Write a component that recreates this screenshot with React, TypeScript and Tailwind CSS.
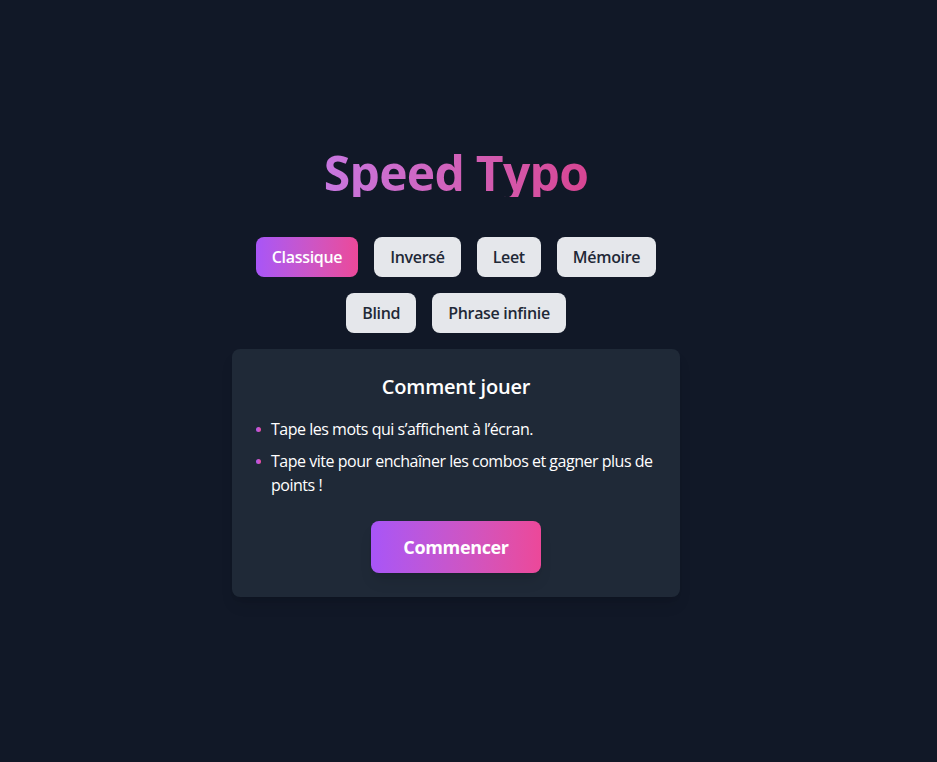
export default function App() {
  const modes = ["Classique", "Inversé", "Leet", "Mémoire", "Blind", "Phrase infinie"];
  const active = "Classique";

  return (
    <main
      className="min-h-screen bg-[#111827] flex flex-col items-center pt-[149px] pr-[25px] text-white"
      style={{ fontFamily: '"Open Sans", "Noto Sans", sans-serif' }}
    >
      <div className="w-full max-w-md flex flex-col items-center">
        <h1 className="w-full text-center text-5xl font-bold tracking-[-0.015em] bg-gradient-to-r from-[#c084fc] to-[#db2777] bg-clip-text text-transparent mb-10">
          Speed Typo
        </h1>

        <div className="flex flex-wrap justify-center gap-4 mb-4 tracking-[-0.02em]">
          {modes.map((m) =>
            m === active ? (
              <button
                key={m}
                className="rounded-lg px-4 py-2 font-semibold text-white bg-gradient-to-r from-[#a855f7] to-[#ec4899]"
              >
                {m}
              </button>
            ) : (
              <button
                key={m}
                className="rounded-lg px-4 py-2 font-semibold text-[#1f2937] bg-[#e5e7eb]"
              >
                {m}
              </button>
            )
          )}
        </div>

        <div className="w-full rounded-lg bg-[#1f2937] p-6 shadow-lg">
          <h2 className="text-xl font-semibold text-center mb-4 tracking-[-0.01em]">Comment jouer</h2>
          <ul className="space-y-2 text-left tracking-[-0.03em]">
            <li className="flex gap-2.5">
              <span className="mt-[10px] h-[5px] w-[5px] shrink-0 rounded-full bg-gradient-to-r from-[#a855f7] to-[#ec4899]" />
              <span>Tape les mots qui s’affichent à l’écran.</span>
            </li>
            <li className="flex gap-2.5">
              <span className="mt-[10px] h-[5px] w-[5px] shrink-0 rounded-full bg-gradient-to-r from-[#a855f7] to-[#ec4899]" />
              <span>Tape vite pour enchaîner les combos et gagner plus de points !</span>
            </li>
          </ul>
          <div className="flex justify-center mt-6">
            <button className="rounded-lg px-8 py-3 text-lg font-bold tracking-[-0.02em] text-white bg-gradient-to-r from-[#a855f7] to-[#ec4899] shadow-lg">
              Commencer
            </button>
          </div>
        </div>
      </div>
    </main>
  );
}
